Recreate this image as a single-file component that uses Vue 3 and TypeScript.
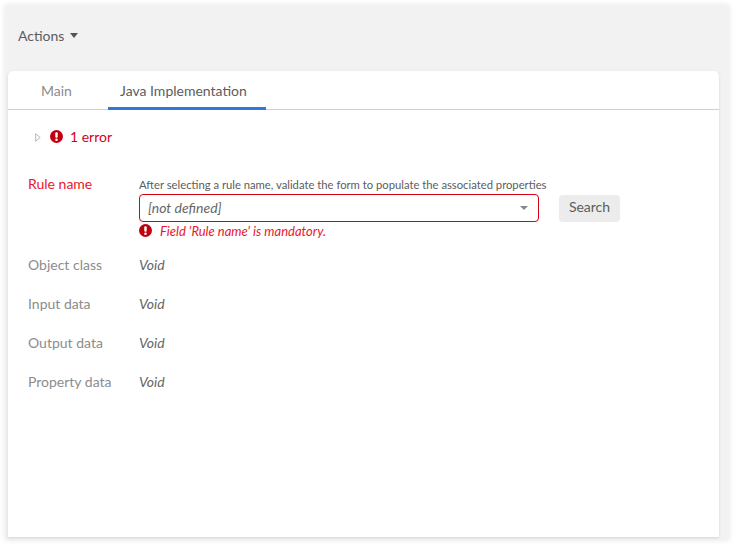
<script setup lang="ts">
const voidRows = ["Object class", "Input data", "Output data", "Property data"];
</script>

<template>
  <div class="page">
    <div class="shell">
      <div class="actions">
        <span>Actions</span>
        <span class="caret"></span>
      </div>
      <div class="card">
        <div class="tabs">
          <div class="tab tab--main">Main</div>
          <div class="tab tab--active">Java Implementation</div>
        </div>
        <div class="body">
          <div class="summary">
            <svg class="twisty" width="6" height="9" viewBox="0 0 6 9">
              <path d="M.7.8 5.2 4.5.7 8.2Z" fill="none" stroke="#b5b5b5" />
            </svg>
            <svg class="alert" width="13" height="13" viewBox="0 0 13 13">
              <circle cx="6.5" cy="6.5" r="6.5" fill="#c00010" />
              <rect x="5.3" y="2.2" width="2.4" height="5.6" rx="1" fill="#fff" />
              <circle cx="6.5" cy="9.8" r="1.3" fill="#fff" />
            </svg>
            <span>1 error</span>
          </div>

          <div class="rule">
            <div class="label label--error">Rule name</div>
            <div class="rule-field">
              <div class="hint">After selecting a rule name, validate the form to populate the associated properties</div>
              <div class="field-line">
                <div class="select">
                  <span class="select-text">[not defined]</span>
                  <span class="select-caret"></span>
                </div>
                <button class="search" type="button">Search</button>
              </div>
              <div class="message">
                <svg width="13" height="13" viewBox="0 0 13 13">
                  <circle cx="6.5" cy="6.5" r="6.5" fill="#c00010" />
                  <rect x="5.3" y="2.2" width="2.4" height="5.6" rx="1" fill="#fff" />
                  <circle cx="6.5" cy="9.8" r="1.3" fill="#fff" />
                </svg>
                <span>Field 'Rule name' is mandatory.</span>
              </div>
            </div>
          </div>

          <div v-for="row in voidRows" :key="row" class="row">
            <div class="label">{{ row }}</div>
            <div class="value">Void</div>
          </div>
        </div>
      </div>
    </div>
  </div>
</template>

<style>
html,
body {
  background: #fff;
}
</style>

<style scoped>
.page {
  box-sizing: border-box;
  width: 738px;
  height: 546px;
  padding: 5px 9px 6px 5px;
  overflow: hidden;
}

.shell {
  box-sizing: border-box;
  height: 535px;
  padding: 0 10px 3px 3px;
  display: flex;
  flex-direction: column;
  background: #f2f2f2;
  box-shadow: 0 0 6px rgb(0 0 0 / 0.1);
  font-family: Lato, "Open Sans", sans-serif;
  font-size: 14px;
  color: #5c5c5c;
}

.actions {
  height: 66px;
  flex: none;
  display: flex;
  align-items: center;
  gap: 6px;
  padding: 0 0 6px 10px;
  box-sizing: border-box;
}

.caret {
  width: 0;
  height: 0;
  border-left: 4.5px solid transparent;
  border-right: 4.5px solid transparent;
  border-top: 5px solid #555;
}

.card {
  flex: 1;
  background: #fff;
  border-radius: 5px 5px 0 0;
  box-shadow: 0 1px 3px rgb(0 0 0 / 0.12);
}

.tabs {
  height: 39px;
  box-sizing: border-box;
  display: flex;
  border-bottom: 1px solid #cfcfcf;
}

.tab {
  height: 39px;
  box-sizing: border-box;
  display: flex;
  align-items: center;
}

.tab--main {
  width: 100px;
  padding: 0 0 1px 33px;
  color: #8c8c8c;
}

.tab--active {
  padding: 2px 19px 0 12px;
  border-bottom: 3px solid #2f78d8;
}

.body {
  padding: 0 20px;
}

.summary {
  height: 55px;
  display: flex;
  align-items: center;
  color: #d6001c;
  padding-bottom: 2px;
  box-sizing: border-box;
}

.twisty {
  margin: 1px 9px 0 7px;
}

.alert {
  margin-right: 7px;
}

.rule {
  display: flex;
  padding-top: 10px;
}

.label {
  width: 111px;
  flex: none;
  color: #8c8c8c;
}

.label--error {
  color: #e8172c;
}

.rule-field {
  flex: 1;
}

.hint {
  font-size: 11.25px;
  line-height: 14px;
  padding-top: 3px;
  color: #5c5c5c;
}

.field-line {
  display: flex;
  align-items: flex-start;
  margin-top: 2px;
}

.select {
  box-sizing: border-box;
  width: 400px;
  height: 28px;
  display: flex;
  align-items: center;
  justify-content: space-between;
  padding: 0 10px 0 8px;
  border: 1px solid #d80012;
  border-radius: 4px;
  font-style: italic;
  color: #666;
}

.select-text {
  margin-bottom: 2px;
}

.select-caret {
  width: 0;
  height: 0;
  border-left: 4px solid transparent;
  border-right: 4px solid transparent;
  border-top: 4px solid #888;
}

.search {
  margin: 1px 0 0 20px;
  width: 61px;
  height: 27px;
  border: 0;
  border-radius: 4px;
  background: #ececec;
  font: inherit;
  color: #5c5c5c;
  padding: 0 0 5px;
}

.message {
  display: flex;
  align-items: center;
  gap: 8px;
  height: 17px;
  font-size: 13px;
  font-style: italic;
  color: #e8172c;
}

.row {
  display: flex;
  align-items: center;
  height: 39px;
}

.rule + .row {
  margin-top: 6px;
}

.value {
  font-style: italic;
  color: #666;
}
</style>
